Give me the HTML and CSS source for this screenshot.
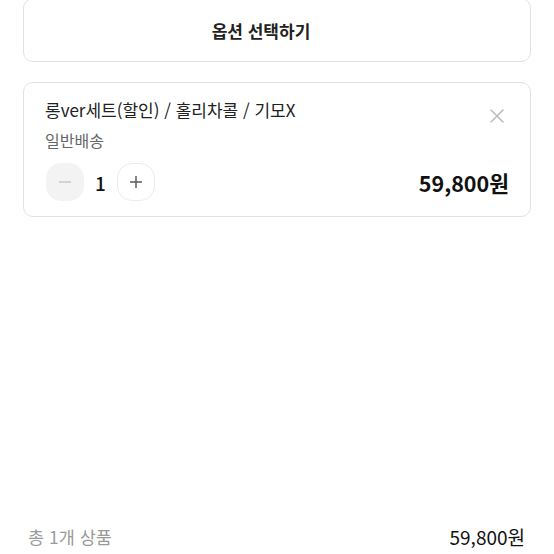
FILE: index.html
```html
<!DOCTYPE html>
<html lang="ko">
<head>
    <meta charset="UTF-8">
    <title>옵션 선택</title>
    <link rel="stylesheet" href="styles.css">
</head>
<body>

<div class="page">
    <button class="option-btn">옵션 선택하기</button>

    <div class="item-card">
        <div class="item-top">
            <div class="item-name">롱ver세트(할인) / 홀리차콜 / 기모X</div>
            <button class="close-btn" aria-label="삭제">
                <svg width="16" height="16" viewBox="0 0 16 16"><path d="M2 2L14 14M14 2L2 14" stroke="#bdbdbd" stroke-width="1.6" stroke-linecap="round"/></svg>
            </button>
        </div>
        <div class="item-ship">일반배송</div>
        <div class="item-bottom">
            <div class="qty">
                <button class="qty-btn minus">
                    <svg width="14" height="14" viewBox="0 0 14 14"><path d="M1 7H13" stroke="#c4c4c4" stroke-width="1.4"/></svg>
                </button>
                <span class="qty-num">1</span>
                <button class="qty-btn plus">
                    <svg width="14" height="14" viewBox="0 0 14 14"><path d="M1 7H13M7 1V13" stroke="#555" stroke-width="1.4"/></svg>
                </button>
            </div>
            <div class="item-price">59,800원</div>
        </div>
    </div>

    <div class="spacer"></div>

    <div class="total">
        <span class="total-label">총 1개 상품</span>
        <span class="total-price">59,800원</span>
    </div>
</div>

</body>
</html>
```

FILE: styles.css
```css
* {
    box-sizing: border-box;
    margin: 0;
    padding: 0;
}
html, body {
    height: 100%;
}
body {
    font-family: 'Noto Sans CJK KR', 'Noto Sans', sans-serif;
    background-color: #fff;
    color: #111;
    overflow: hidden;
}
.page {
    display: flex;
    flex-direction: column;
    height: 554px;
    padding: 0 23px;
}
button {
    font-family: inherit;
    background: none;
    border: none;
    cursor: pointer;
}
.option-btn {
    margin-top: -2px;
    height: 64px;
    width: 100%;
    padding-right: 32px;
    border: 1px solid #e2e2e2;
    border-radius: 10px;
    background: #fff;
    font-size: 17px;
    font-weight: 700;
    color: #222;
}
.item-card {
    margin-top: 20px;
    height: 135px;
    border: 1px solid #e2e2e2;
    border-radius: 10px;
    padding: 16px 25px 0 21px;
}
.item-top {
    display: flex;
    justify-content: space-between;
    align-items: flex-start;
}
.item-name {
    font-size: 17px;
    color: #222;
    line-height: 22px;
}
.close-btn {
    margin-top: 9px;
    display: flex;
}
.item-ship {
    margin-top: 6px;
    font-size: 16px;
    color: #666;
    line-height: 20px;
}
.item-bottom {
    margin-top: 13px;
    display: flex;
    justify-content: space-between;
    align-items: center;
}
.qty {
    display: flex;
    align-items: center;
    padding-left: 1px;
}
.qty-btn {
    width: 38px;
    height: 38px;
    border-radius: 15px;
    display: flex;
    align-items: center;
    justify-content: center;
}
.qty-btn.minus {
    background: #f3f3f3;
}
.qty-btn.plus {
    background: #fff;
    border: 1px solid #ececec;
}
.qty-num {
    width: 33px;
    text-align: center;
    font-size: 19px;
    font-weight: 500;
    color: #111;
}
.item-price {
    font-size: 21.5px;
    font-weight: 600;
    color: #111;
    margin-right: -4px;
}
.spacer {
    flex: 1;
}
.total {
    display: flex;
    justify-content: space-between;
    align-items: center;
    padding: 0 6px 0 5px;
    height: 36px;
}
.total-label {
    font-size: 17.5px;
    color: #9a9a9a;
}
.total-price {
    font-size: 19px;
    color: #111;
}
```
